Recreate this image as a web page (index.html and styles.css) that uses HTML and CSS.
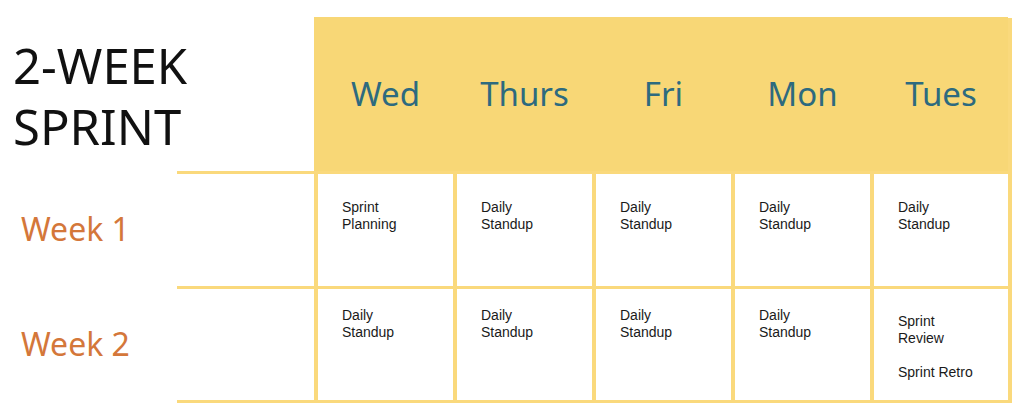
FILE: index.html
```html
<!DOCTYPE html>
<html lang="en">
<head>
<meta charset="utf-8">
<title>2-Week Sprint</title>
<link rel="stylesheet" href="styles.css">
</head>
<body>
<div class="board">
  <div class="title-cell">
    <h1 class="title"><span class="title-line">2-WEEK</span><span class="title-line">SPRINT</span></h1>
  </div>
  <div class="day-head">Wed</div>
  <div class="day-head">Thurs</div>
  <div class="day-head">Fri</div>
  <div class="day-head">Mon</div>
  <div class="day-head">Tues</div>
  <div class="edge"></div>

  <div class="week-label week1">Week 1</div>
  <div class="cell week1">Sprint<br>Planning</div>
  <div class="cell week1">Daily<br>Standup</div>
  <div class="cell week1">Daily<br>Standup</div>
  <div class="cell week1">Daily<br>Standup</div>
  <div class="cell week1">Daily<br>Standup</div>

  <div class="week-label week2">Week 2</div>
  <div class="cell week2">Daily<br>Standup</div>
  <div class="cell week2">Daily<br>Standup</div>
  <div class="cell week2">Daily<br>Standup</div>
  <div class="cell week2">Daily<br>Standup</div>
  <div class="cell week2 review"><p>Sprint<br>Review</p><p class="retro">Sprint Retro</p></div>
</div>
</body>
</html>
```

FILE: styles.css
```css
* { box-sizing: border-box; }

html, body {
  margin: 0;
  padding: 0;
  background: #ffffff;
}

body {
  font-family: "Noto Sans", "Open Sans", sans-serif;
}

.board {
  display: grid;
  grid-template-columns: 314px repeat(4, 139px) 138px 4px;
  grid-template-rows: 154px 115px 117px;
  margin-top: 17px;
}

.title-cell {
  grid-column: 1;
  grid-row: 1;
  padding: 21px 0 0 13px;
}

.title {
  margin: 0;
  display: flex;
  flex-direction: column;
  gap: 7px;
  font-family: "Noto Sans", sans-serif;
  font-weight: 400;
  font-size: 49px;
  line-height: 54px;
  color: #111111;
}

.title-line {
  display: block;
}

.day-head {
  grid-row: 1;
  background: #f8d776;
  border-left: 4px solid #f8d776;
  color: #2d6a7f;
  font-size: 33px;
  display: flex;
  align-items: center;
  justify-content: center;
  padding-bottom: 2px;
}

.day-head + .day-head {
  background-image: linear-gradient(#fbe3a3, #fbe3a3);
  background-size: 1px 100%;
  background-position: 1px 0;
  background-repeat: no-repeat;
  background-origin: border-box;
}

.edge {
  grid-column: 7;
  grid-row: 1 / 4;
  background: #fad97c;
  margin-top: 1px;
}

.week-label {
  grid-column: 1;
  display: flex;
  align-items: center;
  padding-left: 21px;
  color: #d4773a;
  font-size: 32px;
  background-image: linear-gradient(#fad97c, #fad97c);
  background-repeat: no-repeat;
  background-size: 137px 3px;
  background-position: 177px 0;
}

.week-label.week2 {
  background-image: linear-gradient(#fad97c, #fad97c), linear-gradient(#fad97c, #fad97c);
  background-size: 137px 3px, 137px 3px;
  background-position: 177px 0, 177px 114px;
  padding-bottom: 2px;
}

.cell {
  border-top: 3px solid #fad97c;
  border-left: 4px solid #fad97c;
  font-family: "Liberation Sans", Arial, sans-serif;
  font-size: 14px;
  line-height: 17px;
  color: #1a1a1a;
  padding-left: 24px;
}

.cell.week1 { padding-top: 25px; }

.cell.week2 {
  padding-top: 18px;
  border-bottom: 3px solid #fad97c;
  height: 117px;
}

.cell.review { padding-top: 24px; }

.cell p { margin: 0; }

.cell .retro { margin-top: 17px; }
```
